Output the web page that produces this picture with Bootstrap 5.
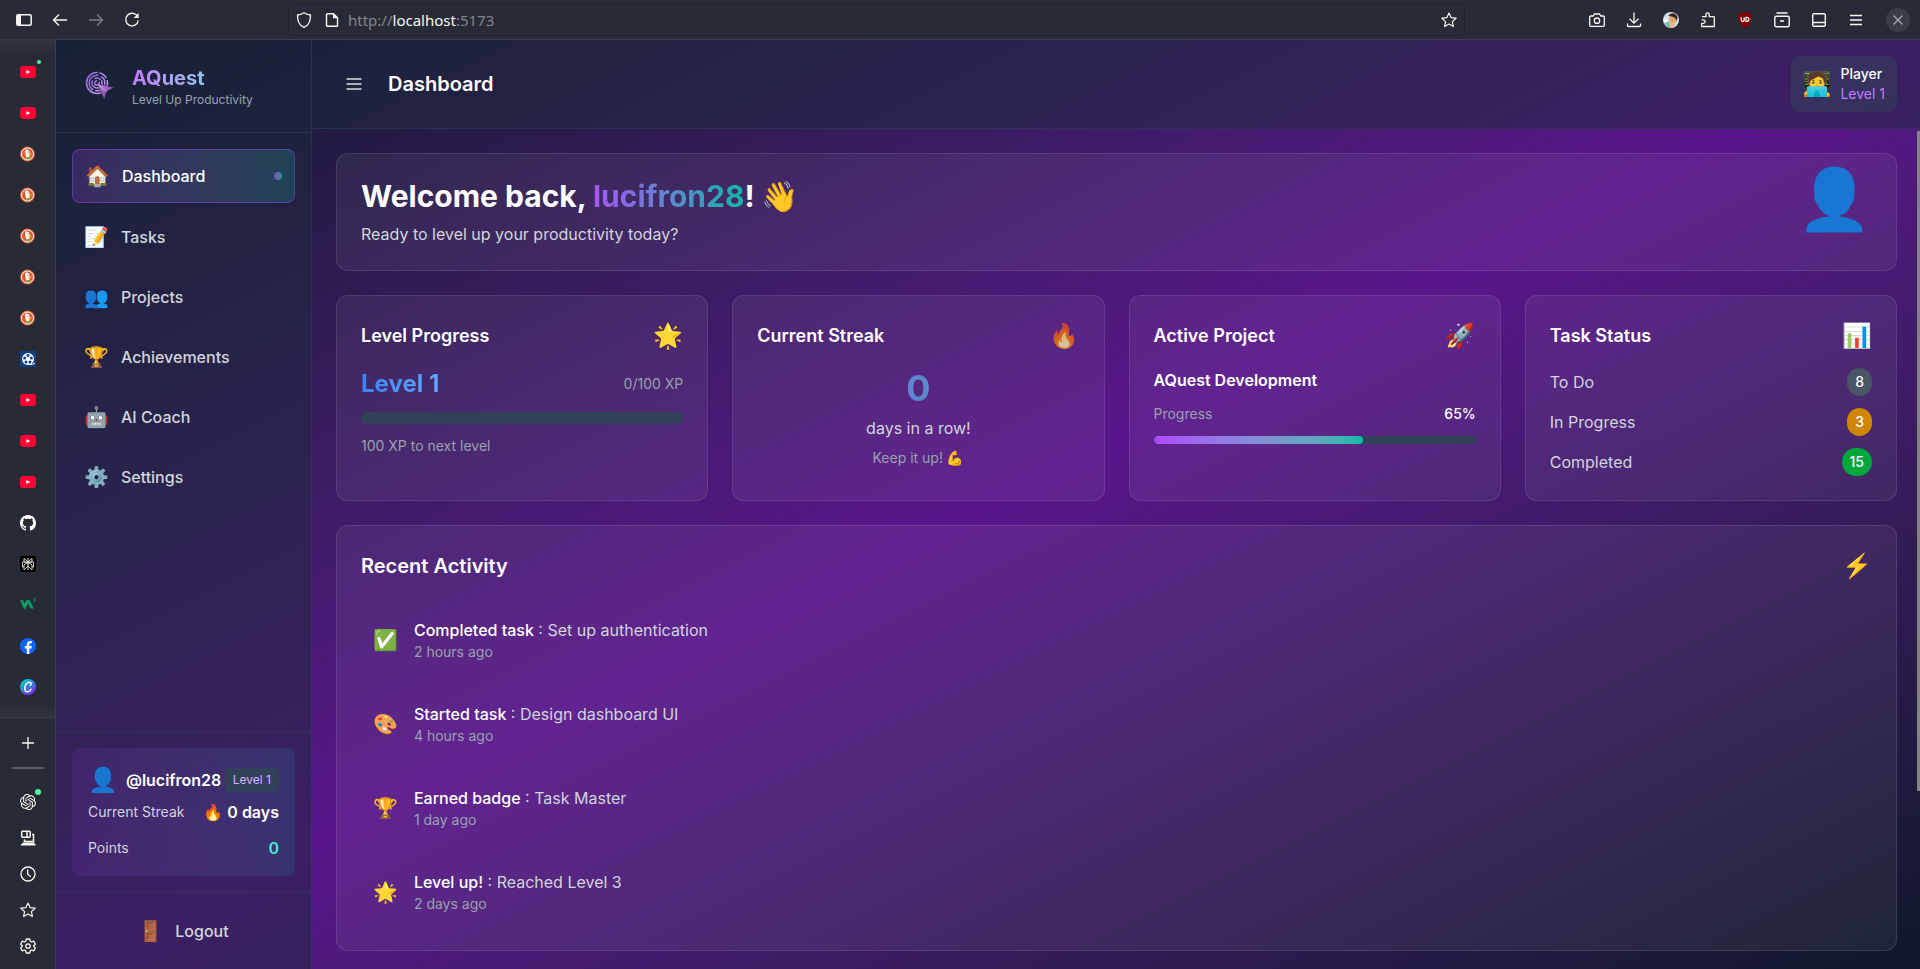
<!DOCTYPE html>
<html lang="en">
<head>
<meta charset="utf-8">
<meta name="viewport" content="width=device-width, initial-scale=1">
<title>AQuest</title>
<link href="https://cdn.jsdelivr.net/npm/bootstrap@5.3.0/dist/css/bootstrap.min.css" rel="stylesheet">
<style>
:root { --chrome:#282a36; --line:rgba(49,65,88,.5); --panel:rgba(29,41,61,.5); --soft:#d1d5dc; --dim:#99a1af; }
body { font-family:Inter,"Noto Color Emoji",sans-serif; font-size:16px; line-height:24px; color:#fff; background:var(--chrome); }
a { text-decoration:none; color:inherit; }
button { background:none; border:0; padding:0; color:inherit; line-height:inherit; }
h1,h2,h3,p { margin:0; }
svg { display:block; flex:none; }
.t12 { font-size:12px; line-height:16px; }
.t14 { font-size:14px; line-height:20px; }
.t18 { font-size:18px; line-height:28px; }
.t20 { font-size:20px; line-height:28px; }
.t24 { font-size:24px; line-height:32px; }
.t30 { font-size:30px; line-height:36px; }
.t36 { font-size:36px; line-height:40px; }
.soft { color:var(--soft); } .dim { color:var(--dim); } .violet { color:#c27aff; } .aqua { color:#46ecd5; }
.clip { background-clip:text; -webkit-background-clip:text; color:transparent; }
.blend { background-image:linear-gradient(to right in oklab,#ad46ff,#00bba7); }
.blend-text { background-image:linear-gradient(to right,#a855f7,#14b8a6); }
.blue-text { background-image:linear-gradient(to right,#3b82f6,#60a5fa); }

/* browser chrome */
.toolbar { height:39px; background:var(--chrome); color:#f8f8f2; padding:1px 10px 0 12px; }
.toolbar > .side { width:276px; gap:12px; }
.toolbar button { width:24px; height:24px; display:flex; align-items:center; justify-content:center; }
.tools { gap:13px; }
.toolbar .closer { background:#3a3c47; border-radius:50%; color:#a9aab0; margin-left:5px; }
.toolbar .faded { opacity:.4; }
.address { width:62%; height:32px; border:1px solid #20212b; border-radius:4px; padding:0 3px; gap:4px; }
.url { font-family:"Noto Sans",sans-serif; font-size:15px; color:#84858c; }
.url b { font-weight:400; color:#f8f8f2; }
.rail { width:56px; background:var(--chrome); color:#f8f8f2; border-right:1px solid #3a3b4e; }
.tabs-list { padding:25px 0 24px; gap:25px; background:linear-gradient(#343540,transparent 16px),linear-gradient(0deg,#343540,transparent 16px); }
.tabs-list a, .rail-tools button { position:relative; width:16px; height:16px; }
.rail-tools { gap:20px; }
.rail-tools hr { width:32px; height:2px; margin:-4px 0 5px; background:#5b5c63; border:0; opacity:1; }
.ping { position:absolute; border-radius:50%; background:#50fa9f; width:6px; height:6px; top:-5px; right:-5px; }
.tabs-list .ping { width:4px; height:4px; top:-4px; }

/* application shell */
.quest { background:linear-gradient(to bottom right in oklab,#0f172b,#59168b,#0f172b); min-width:0; border-top:1px solid #3a3b4e; }
.sidebar { width:256px; background:var(--panel); border-right:1px solid var(--line); }
.brand { padding:24px; gap:12px; border-bottom:1px solid var(--line); }
.brand h1 { background-image:linear-gradient(to right in oklab,#c27aff,#46ecd5); }
.menu { padding:16px; gap:8px; }
.menu a { padding:12px; gap:12px; border-radius:8px; color:var(--soft); font-weight:500; }
.menu a.on { color:#fff; border:1px solid rgba(173,70,255,.4); background:linear-gradient(to right in oklab,rgba(173,70,255,.2),rgba(0,187,167,.22)); }
.dot { width:8px; height:8px; border-radius:50%; opacity:.6; margin-left:auto; }
.emo { flex:none; display:block; font-family:"Noto Color Emoji",sans-serif; }
.profile-wrap { padding:16px; border-top:1px solid var(--line); }
.profile { padding:16px; border-radius:8px; background:linear-gradient(to right in oklab,rgba(173,70,255,.1),rgba(0,184,219,.12)); }
.level-tag { background:#314158; color:#dab2ff; padding:4px 8px; border-radius:4px; }
.logout { border-top:1px solid var(--line); padding:16px; }
.logout button { padding:8px 12px; gap:12px; font-weight:500; color:var(--soft); }

.topbar { background:var(--panel); border-bottom:1px solid var(--line); padding:16px 23px 16px 24px; }
.topbar .burger { padding:8px; margin-right:16px; color:#aab0ba; }
.player { background:rgba(49,65,88,.5); border-radius:8px; padding:8px 12px; gap:8px; }
.page-body { padding:24px 23px 24px 24px; gap:24px; overflow:hidden; }
.glass { background:rgba(255,255,255,.06); border:1px solid rgba(255,255,255,.1); border-radius:12px; padding:24px; }
.page-body > * { flex:none; }
.avatar { font-size:60px; line-height:44px; height:44px; }
.stats { display:grid; grid-template-columns:repeat(4,1fr); gap:24px; }
.track { background:#314158; border-radius:6px; overflow:hidden; height:12px; }
.track.thin { height:8px; }
.track > div { height:100%; border-radius:6px; }
.g12 { gap:12px; }
.pill { padding:4px 8px; border-radius:14px; font-weight:500; }
.pill-todo { background:#4a5565; } .pill-doing { background:#d08700; } .pill-done { background:#00a63e; }
.thumb { position:absolute; right:0; top:91px; width:3px; height:71%; background:#838383; }
.act { padding:12px; gap:16px; }
</style>
</head>
<body class="vh-100 d-flex flex-column overflow-hidden">
<svg width="0" height="0" class="position-absolute" aria-hidden="true">
  <symbol id="yt" viewBox="0 0 16 16"><rect y="2" width="16" height="12" rx="3" fill="#ff0033"/><path d="M6.300 5.900v4.200L10.300 8z" fill="#fff"/></symbol>
  <symbol id="duck" viewBox="0 0 16 16"><circle cx="7.500" cy="8" r="7.500" fill="#de5833"/><circle cx="7.500" cy="8" r="6" fill="none" stroke="#fff" stroke-width="1"/><path d="M5.300 4c1.800-1 3.900 0 4.200 2l.2 2.200-.6 4.600-2.400.2C6 10 4.700 6.500 5.300 4z" fill="#fff"/><circle cx="8" cy="5.900" r=".5" fill="#2d4f8e"/><path d="M8.500 7.200l3.200.3-.7 1.600-2.500.2z" fill="#fdb924"/><path d="M6.300 10.800l3.700.4-.5 1.800-2.700.1z" fill="#4cba3c"/></symbol>
  <symbol id="star" viewBox="0 0 16 16"><path d="M8 1l2.100 4.600 5 .6-3.700 3.400 1 4.900L8 12l-4.400 2.500 1-4.900L.9 6.200l5-.6z" fill="none" stroke="currentColor" stroke-width="1.200" stroke-linejoin="round"/></symbol>
</svg>

<header class="toolbar d-flex align-items-center flex-shrink-0">
  <div class="side d-flex flex-shrink-0">
    <button aria-label="Sidebar"><svg width="16" height="16" viewBox="0 0 16 16"><rect x=".8" y="2.800" width="14.400" height="10.400" rx="1.200" fill="none" stroke="currentColor" stroke-width="1.500"/><path d="M1 3h4v10H1z" fill="currentColor"/></svg></button>
    <button aria-label="Back"><svg width="16" height="16" viewBox="0 0 16 16" fill="none" stroke="currentColor" stroke-width="1.400"><path d="M15 8H1.500M7 2.500L1.500 8 7 13.500"/></svg></button>
    <button class="faded" aria-label="Forward"><svg width="16" height="16" viewBox="0 0 16 16" fill="none" stroke="currentColor" stroke-width="1.400"><path d="M1 8h13.500M9 2.500L14.500 8 9 13.500"/></svg></button>
    <button aria-label="Reload"><svg width="16" height="16" viewBox="0 0 16 16" fill="none" stroke="currentColor" stroke-width="1.400"><path d="M13.800 5A6.300 6.300 0 1 0 14.300 8.500"/><path d="M14.600 1v5h-5z" fill="currentColor" stroke="none"/></svg></button>
  </div>
  <div class="address d-flex align-items-center">
    <button aria-label="Site protection"><svg width="16" height="16" viewBox="0 0 16 16" fill="none" stroke="currentColor" stroke-width="1.300"><path d="M8 .8c2 1.400 4 2 6.500 2.200C14.600 9 12.500 13.500 8 15.300 3.500 13.500 1.400 9 1.500 3 4 2.800 6 2.200 8 .8z" stroke-linejoin="round"/></svg></button>
    <button aria-label="Site information"><svg width="16" height="16" viewBox="0 0 16 16" fill="none" stroke="currentColor" stroke-width="1.400"><path d="M3.500 1.700h6L13.500 5.700v8.600h-10a1 1 0 0 1-1-1V2.700a1 1 0 0 1 1-1z" stroke-linejoin="round"/><path d="M9 1v5.200h5z" fill="currentColor" stroke="none"/></svg></button>
    <span class="url">http://<b>localhost</b>:5173</span>
    <button class="ms-auto" aria-label="Bookmark"><svg width="16" height="16"><use href="#star"/></svg></button>
  </div>
  <div class="tools d-flex align-items-center ms-auto">
    <button aria-label="Screenshot"><svg width="16" height="16" viewBox="0 0 16 16" fill="none" stroke="currentColor" stroke-width="1.300"><path d="M1.700 4h2.500l1.300-2h5l1.300 2h2.500a1 1 0 0 1 1 1v8.300a1 1 0 0 1-1 1H1.700a1 1 0 0 1-1-1V5a1 1 0 0 1 1-1z"/><circle cx="8" cy="8.700" r="2.700"/></svg></button>
    <button aria-label="Downloads"><svg width="16" height="16" viewBox="0 0 16 16" fill="none" stroke="currentColor" stroke-width="1.300"><path d="M8 .5v10.500M3.500 6.700L8 11.200l4.500-4.500M1.500 11.500v2a1 1 0 0 0 1 1h11a1 1 0 0 0 1-1v-2"/></svg></button>
    <button aria-label="Account"><svg width="16" height="16" viewBox="0 0 16 16"><circle cx="8" cy="8" r="8" fill="#cfe3ee"/><path d="M1 11c4-3 7-2 8 4.900A8 8 0 0 1 1 11z" fill="#83b7c2"/><circle cx="10" cy="7" r="4" fill="#e7a36c"/><path d="M5.500 4C7 0 14 0 14.500 6l-1 3c0-3-3-4.500-8-5z" fill="#3a2520"/><path d="M6 12c2-2 5-2 7 0l-3 3.800-2 .1z" fill="#f2b98a"/><path d="M0 8c2-1 4-1 5 1l-3 2z" fill="#fff"/></svg></button>
    <button aria-label="Extensions"><svg width="16" height="16" viewBox="0 0 16 16" fill="none" stroke="currentColor" stroke-width="1.300"><path d="M2 4.700h4V2.400a1.600 1.600 0 0 1 3.200 0v2.300h4.300a.8.800 0 0 1 .8.800v9H1.700v-3.200H3.400a1.600 1.600 0 0 0 0-3.400H1.700" stroke-linejoin="round"/></svg></button>
    <button aria-label="Ad blocker"><svg width="16" height="16" viewBox="0 0 16 16"><path d="M8 0c2 1.300 4.500 1.800 7 1.800C15 8.500 13.500 13 8 16 2.500 13 1 8.500 1 1.800 3.500 1.800 6 1.300 8 0z" fill="#800000"/><path d="M4.200 5.300v2.600a1.500 1.500 0 0 0 3 0V5.300M9 5.300v4h1a1.900 2 0 0 0 0-4z" fill="none" stroke="#fff" stroke-width="1.200"/></svg></button>
    <button aria-label="Archive"><svg width="16" height="16" viewBox="0 0 16 16" fill="none" stroke="currentColor" stroke-width="1.400"><path d="M2.500 1h11M6 9h4"/><rect x=".8" y="4.200" width="14.400" height="10.600" rx="1.500"/></svg></button>
    <button aria-label="Panel"><svg width="16" height="16" viewBox="0 0 16 16" fill="none" stroke="currentColor" stroke-width="1.400"><rect x="1.700" y="1.700" width="12.600" height="12.600" rx="1.500"/><path d="M2 10.500h12"/></svg></button>
    <button aria-label="Menu"><svg width="16" height="16" viewBox="0 0 16 16" stroke="currentColor" stroke-width="1.300"><path d="M2 3.500h12M2 8h12M2 12.500h12"/></svg></button>
    <button class="closer" aria-label="Close"><svg width="12" height="12" viewBox="0 0 12 12" stroke="currentColor" stroke-width="1.200"><path d="M1.500 1.500l9 9M10.500 1.500l-9 9"/></svg></button>
  </div>
</header>

<div class="d-flex flex-grow-1" style="min-height:0">
  <nav class="rail d-flex flex-column flex-shrink-0" aria-label="Open tabs">
    <div class="tabs-list d-flex flex-column align-items-center">
      <a href="#" aria-label="YouTube"><svg width="16" height="16"><use href="#yt"/></svg><span class="ping"></span></a>
      <a href="#" aria-label="YouTube"><svg width="16" height="16"><use href="#yt"/></svg></a>
      <a href="#" aria-label="DuckDuckGo"><svg width="16" height="16"><use href="#duck"/></svg></a>
      <a href="#" aria-label="DuckDuckGo"><svg width="16" height="16"><use href="#duck"/></svg></a>
      <a href="#" aria-label="DuckDuckGo"><svg width="16" height="16"><use href="#duck"/></svg></a>
      <a href="#" aria-label="DuckDuckGo"><svg width="16" height="16"><use href="#duck"/></svg></a>
      <a href="#" aria-label="DuckDuckGo"><svg width="16" height="16"><use href="#duck"/></svg></a>
      <a href="#" aria-label="Films"><svg width="16" height="16" viewBox="0 0 16 16"><rect width="16" height="16" rx="1" fill="#0f4083"/><circle cx="8" cy="8" r="6" fill="#fff"/><g fill="#0f4083"><circle cx="8" cy="4.500" r="1.500"/><circle cx="4.700" cy="7" r="1.500"/><circle cx="11.300" cy="7" r="1.500"/><circle cx="6" cy="10.900" r="1.500"/><circle cx="10" cy="10.900" r="1.500"/></g><path d="M10 13.500q3 .2 5-1.500" fill="none" stroke="#fff"/></svg></a>
      <a href="#" aria-label="YouTube"><svg width="16" height="16"><use href="#yt"/></svg></a>
      <a href="#" aria-label="YouTube"><svg width="16" height="16"><use href="#yt"/></svg></a>
      <a href="#" aria-label="YouTube"><svg width="16" height="16"><use href="#yt"/></svg></a>
      <a href="#" aria-label="GitHub"><svg width="16" height="16" viewBox="0 0 16 16" fill="#fff"><path d="M8 0C3.580 0 0 3.580 0 8c0 3.540 2.290 6.530 5.470 7.590.4.070.55-.17.55-.38 0-.19-.01-.82-.01-1.490-2.010.37-2.530-.49-2.690-.94-.09-.23-.48-.94-.82-1.130-.28-.15-.68-.52-.01-.53.63-.01 1.080.58 1.230.82.72 1.210 1.870.87 2.330.66.07-.52.28-.87.51-1.070-1.780-.2-3.640-.89-3.640-3.950 0-.87.31-1.590.82-2.150-.08-.2-.36-1.020.08-2.120 0 0 .67-.21 2.200.82.640-.18 1.320-.27 2-.27s1.360.09 2 .27c1.530-1.040 2.200-.82 2.200-.82.440 1.100.16 1.920.08 2.120.51.560.82 1.270.82 2.150 0 3.070-1.870 3.750-3.650 3.950.29.250.54.730.54 1.480 0 1.070-.01 1.930-.01 2.200 0 .21.15.46.55.38A8.010 8.010 0 0 0 16 8c0-4.420-3.580-8-8-8"/></svg></a>
      <a href="#" aria-label="Perplexity"><svg width="16" height="16" viewBox="0 0 16 16"><rect width="16" height="16" rx="1" fill="#000"/><path d="M8 2v12M4 2.500L8 6l4-3.500V6H4zM2.500 6h3L8 8.500 10.500 6h3v5H12V9L8 6 4 9v2H2.500zM4 11v2.800L8 10l4 3.800V11" fill="none" stroke="#e8e8e0" stroke-width=".9"/></svg></a>
      <a href="#" aria-label="W3Schools"><svg width="16" height="16" viewBox="0 0 16 16"><path d="M0 3.200h3.200l1.500 3.600L6.600 3h3l4.200 8.500h-3L8 6.800 5.200 12H4z" fill="#06a064"/><path d="M13.300 1.300h2.100l-1 1.400c1.800 0 1.400 2.200-1 1.600" fill="none" stroke="#06a064" stroke-width=".8"/></svg></a>
      <a href="#" aria-label="Facebook"><svg width="16" height="16" viewBox="0 0 16 16"><circle cx="8" cy="8" r="8" fill="#0866ff"/><path d="M6.800 15.900V10.500H4.800V8h2V6.700c0-2.700 1.300-3.800 3.600-3.800.6 0 1.200.1 1.500.2v2.200h-1c-1.200 0-1.500.5-1.500 1.500V8h2.400l-.4 2.500h-2v5.400z" fill="#fff"/></svg></a>
      <a href="#" aria-label="Canva"><svg width="16" height="16" viewBox="0 0 16 16"><defs><linearGradient id="cv" x1="0" y1="0" x2=".7" y2="1"><stop offset=".2" stop-color="#00c4cc"/><stop offset="1" stop-color="#7d2ae8"/></linearGradient></defs><circle cx="8" cy="8" r="8" fill="url(#cv)"/><path d="M10.300 6.300c1.500-.8 1.200-3-.8-3-2.800 0-4.800 3.200-4.800 6 0 2 1 3.500 2.700 3.500 1.800 0 3-1.300 3.600-2.600" fill="none" stroke="#fff" stroke-width="1.400" stroke-linecap="round"/></svg></a>
    </div>
    <div class="rail-tools d-flex flex-column align-items-center pt-3">
      <button aria-label="New tab"><svg width="16" height="16" viewBox="0 0 16 16" stroke="currentColor" stroke-width="1.300"><path d="M8 2v12M2 8h12"/></svg></button>
      <hr>
      <button aria-label="AI chat"><svg width="16" height="16" viewBox="0 0 24 24" fill="currentColor"><path d="M22.2819 9.8211a5.9847 5.9847 0 0 0-.5157-4.9108 6.0462 6.0462 0 0 0-6.5098-2.9A6.0651 6.0651 0 0 0 4.9807 4.1818a5.9847 5.9847 0 0 0-3.9977 2.9 6.0462 6.0462 0 0 0 .7427 7.0966 5.98 5.98 0 0 0 .511 4.9107 6.051 6.051 0 0 0 6.5146 2.9001A5.9847 5.9847 0 0 0 13.2599 24a6.0557 6.0557 0 0 0 5.7718-4.2058 5.9894 5.9894 0 0 0 3.9977-2.9001 6.0557 6.0557 0 0 0-.7475-7.0729zm-9.022 12.6081a4.4755 4.4755 0 0 1-2.8764-1.0408l.1419-.0804 4.7783-2.7582a.7948.7948 0 0 0 .3927-.6813v-6.7369l2.02 1.1686a.071.071 0 0 1 .038.052v5.5826a4.504 4.504 0 0 1-4.4945 4.4944zm-9.6607-4.1254a4.4708 4.4708 0 0 1-.5346-3.0137l.142.0852 4.783 2.7582a.7712.7712 0 0 0 .7806 0l5.8428-3.3685v2.3324a.0804.0804 0 0 1-.0332.0615L9.74 19.9502a4.4992 4.4992 0 0 1-6.1408-1.6464zM2.3408 7.8956a4.485 4.485 0 0 1 2.3655-1.9728V11.6a.7664.7664 0 0 0 .3879.6765l5.8144 3.3543-2.0201 1.1685a.0757.0757 0 0 1-.071 0l-4.8303-2.7865A4.504 4.504 0 0 1 2.3408 7.872zm16.5963 3.8558L13.1038 8.364 15.1192 7.2a.0757.0757 0 0 1 .071 0l4.8303 2.7913a4.4944 4.4944 0 0 1-.6765 8.1042v-5.6772a.79.79 0 0 0-.407-.667zm2.0107-3.0231l-.142-.0852-4.7735-2.7818a.7759.7759 0 0 0-.7854 0L9.409 9.2297V6.8974a.0662.0662 0 0 1 .0284-.0615l4.8303-2.7866a4.4992 4.4992 0 0 1 6.6802 4.66zM8.3065 12.863l-2.02-1.1638a.0804.0804 0 0 1-.038-.0567V6.0742a4.4992 4.4992 0 0 1 7.3757-3.4537l-.142.0805L8.704 5.459a.7948.7948 0 0 0-.3927.6813zm1.0976-2.3654l2.602-1.4998 2.6069 1.4998v2.9994l-2.5974 1.4997-2.6067-1.4997Z"/></svg><span class="ping"></span></button>
      <button aria-label="Synced devices"><svg width="16" height="16" viewBox="0 0 16 16" fill="none" stroke="currentColor" stroke-width="1.500"><rect x="1.700" y="1.200" width="8.500" height="6" rx="1"/><path d="M7 1v6M12 4.500h1.500v7h-9v-2M1 14.700h14.500"/><path d="M2.500 12.500h12v2h-12z" fill="currentColor" stroke="none"/></svg></button>
      <button aria-label="History"><svg width="16" height="16" viewBox="0 0 16 16" fill="none" stroke="currentColor" stroke-width="1.300"><circle cx="8" cy="8" r="7"/><path d="M7.700 3.500v4.700l3 2.500"/></svg></button>
      <button aria-label="Bookmarks"><svg width="16" height="16"><use href="#star"/></svg></button>
      <button aria-label="Settings"><svg width="16" height="16" viewBox="0 0 16 16" fill="none" stroke="currentColor" stroke-width="1.300" stroke-linejoin="round"><path d="M6.300 1h3.400l.6 2.300 1.200.7 2.300-.8 1.500 2.900L13.600 8l1.700 1.900-1.500 2.900-2.300-.8-1.200.7L9.700 15H6.300l-.6-2.300-1.200-.7-2.300.8L.7 9.900 2.400 8 .7 6.100l1.500-2.900 2.300.8 1.200-.7z"/><circle cx="8" cy="8" r="2.200"/></svg></button>
    </div>
  </nav>

  <div class="quest d-flex flex-grow-1 position-relative">
    <aside class="sidebar d-flex flex-column flex-shrink-0">
      <div class="brand d-flex align-items-center">
        <svg width="40" height="40" viewBox="0 0 40 40" fill="none"><defs><linearGradient id="aq" x1="0" y1="0" x2="1" y2="1"><stop stop-color="#8a63d8"/><stop offset="1" stop-color="#c9a2f5"/></linearGradient><linearGradient id="ar" x1="0" y1="0" x2="1" y2="1"><stop stop-color="#d47ef5"/><stop offset="1" stop-color="#4c3a78"/></linearGradient></defs>
          <g stroke="url(#aq)"><circle cx="17" cy="17" r="10.500" stroke-width="1.600" stroke-dasharray="50 1.500 9 2"/><circle cx="17" cy="17" r="7.800" stroke-width="1.500" stroke-dasharray="14 2 22 3"/><circle cx="17" cy="17" r="5" stroke-width="1.500" stroke-dasharray="18 2 7 1"/><circle cx="17" cy="17" r="2.300" stroke-width="1.500" stroke-dasharray="10 2"/></g>
          <path d="M17 17.500l17.500 4-8 4-2 8.500z" fill="url(#ar)" stroke="#1d2440" stroke-width=".6"/><path d="M17 17.500l9.500 8" stroke="#e9b6ff" stroke-width=".7"/></svg>
        <div><h1 class="t20 fw-bold clip">AQuest</h1><p class="t12 dim">Level Up Productivity</p></div>
      </div>
      <nav class="menu d-flex flex-column" aria-label="Main">
        <a class="on d-flex align-items-center" href="#"><span class="emo t20">🏠</span>Dashboard<span class="dot blend"></span></a>
        <a class="d-flex align-items-center" href="#"><span class="emo t20">📝</span>Tasks</a>
        <a class="d-flex align-items-center" href="#"><span class="emo t20">👥</span>Projects</a>
        <a class="d-flex align-items-center" href="#"><span class="emo t20">🏆</span>Achievements</a>
        <a class="d-flex align-items-center" href="#"><span class="emo t20">🤖</span>AI Coach</a>
        <a class="d-flex align-items-center" href="#"><span class="emo t20">⚙️</span>Settings</a>
      </nav>
      <div class="profile-wrap mt-auto">
        <div class="profile">
          <div class="d-flex align-items-center justify-content-between mb-1">
            <div class="d-flex align-items-center gap-2"><span class="emo t24">👤</span><span class="fw-semibold">@lucifron28</span></div>
            <span class="level-tag t12">Level 1</span>
          </div>
          <div class="d-flex align-items-center justify-content-between"><span class="t14 soft">Current Streak</span><span class="fw-semibold">🔥 0 days</span></div>
          <div class="d-flex align-items-center justify-content-between pt-1 mt-2"><span class="t14 soft">Points</span><span class="fw-semibold aqua">0</span></div>
        </div>
      </div>
      <div class="logout"><button class="w-100 d-flex align-items-center justify-content-center"><span class="emo t20">🚪</span>Logout</button></div>
    </aside>

    <div class="d-flex flex-column flex-grow-1" style="min-width:0">
      <header class="topbar d-flex align-items-center">
        <button class="burger" aria-label="Toggle menu"><svg width="20" height="20" viewBox="0 0 20 20" stroke="currentColor" stroke-width="2"><path d="M2.500 5h15M2.500 10h15M2.500 15h15"/></svg></button>
        <h2 class="t20 fw-semibold">Dashboard</h2>
        <div class="player d-flex align-items-center ms-auto">
          <span class="emo t24">🧑‍💻</span>
          <div class="t14"><div class="fw-medium">Player</div><div class="violet">Level 1</div></div>
        </div>
      </header>
      <main class="page-body d-flex flex-column flex-grow-1">
        <section class="glass d-flex justify-content-between">
          <div><h1 class="t30 fw-bold mb-2">Welcome back, <span class="clip blend-text">lucifron28</span>! 👋</h1><p class="soft">Ready to level up your productivity today?</p></div>
          <span class="emo avatar">👤</span>
        </section>
        <section class="stats">
          <article class="glass">
            <div class="d-flex align-items-center justify-content-between mb-3"><h3 class="t18 fw-semibold">Level Progress</h3><span class="emo t24">🌟</span></div>
            <div class="d-flex flex-column g12">
              <div class="d-flex align-items-center justify-content-between"><span class="t24 fw-bold clip blue-text">Level 1</span><span class="t14 dim">0/100 XP</span></div>
              <div class="track" role="progressbar" aria-label="Experience" aria-valuenow="0"><div class="blend" style="width:0%"></div></div>
              <p class="t14 dim">100 XP to next level</p>
            </div>
          </article>
          <article class="glass">
            <div class="d-flex align-items-center justify-content-between mb-3"><h3 class="t18 fw-semibold">Current Streak</h3><span class="emo t24 opacity-75">🔥</span></div>
            <div class="text-center"><div class="t36 fw-bold clip blend-text mb-2">0</div><p class="soft mb-2">days in a row!</p><p class="t14 dim">Keep it up! 💪</p></div>
          </article>
          <article class="glass">
            <div class="d-flex align-items-center justify-content-between mb-3"><h3 class="t18 fw-semibold">Active Project</h3><span class="emo t24">🚀</span></div>
            <div class="d-flex flex-column g12">
              <div class="fw-semibold">AQuest Development</div>
              <div class="d-flex justify-content-between t14"><span class="dim">Progress</span><span class="fw-medium">65%</span></div>
              <div class="track thin" role="progressbar" aria-label="Project progress" aria-valuenow="65"><div class="blend" style="width:65%"></div></div>
            </div>
          </article>
          <article class="glass">
            <div class="d-flex align-items-center justify-content-between mb-3"><h3 class="t18 fw-semibold">Task Status</h3><span class="emo t24">📊</span></div>
            <div class="d-flex flex-column g12">
              <div class="d-flex align-items-center justify-content-between"><span class="soft">To Do</span><span class="pill pill-todo t14">8</span></div>
              <div class="d-flex align-items-center justify-content-between"><span class="soft">In Progress</span><span class="pill pill-doing t14">3</span></div>
              <div class="d-flex align-items-center justify-content-between"><span class="soft">Completed</span><span class="pill pill-done t14">15</span></div>
            </div>
          </article>
        </section>
        <section class="glass">
          <div class="d-flex align-items-center justify-content-between mb-4"><h2 class="t20 fw-semibold">Recent Activity</h2><span class="emo t24">⚡</span></div>
          <div class="d-flex flex-column gap-3">
            <div class="act d-flex align-items-center"><span class="emo t20">✅</span><div><div><span class="fw-medium">Completed task</span> <span class="soft">: Set up authentication</span></div><div class="t14 dim">2 hours ago</div></div></div>
            <div class="act d-flex align-items-center"><span class="emo t20">🎨</span><div><div><span class="fw-medium">Started task</span> <span class="soft">: Design dashboard UI</span></div><div class="t14 dim">4 hours ago</div></div></div>
            <div class="act d-flex align-items-center"><span class="emo t20">🏆</span><div><div><span class="fw-medium">Earned badge</span> <span class="soft">: Task Master</span></div><div class="t14 dim">1 day ago</div></div></div>
            <div class="act d-flex align-items-center"><span class="emo t20">🌟</span><div><div><span class="fw-medium">Level up!</span> <span class="soft">: Reached Level 3</span></div><div class="t14 dim">2 days ago</div></div></div>
          </div>
        </section>
      </main>
    </div>
    <div class="thumb"></div>
  </div>
</div>
<script src="https://cdn.jsdelivr.net/npm/bootstrap@5.3.0/dist/js/bootstrap.bundle.min.js"></script>
</body>
</html>
